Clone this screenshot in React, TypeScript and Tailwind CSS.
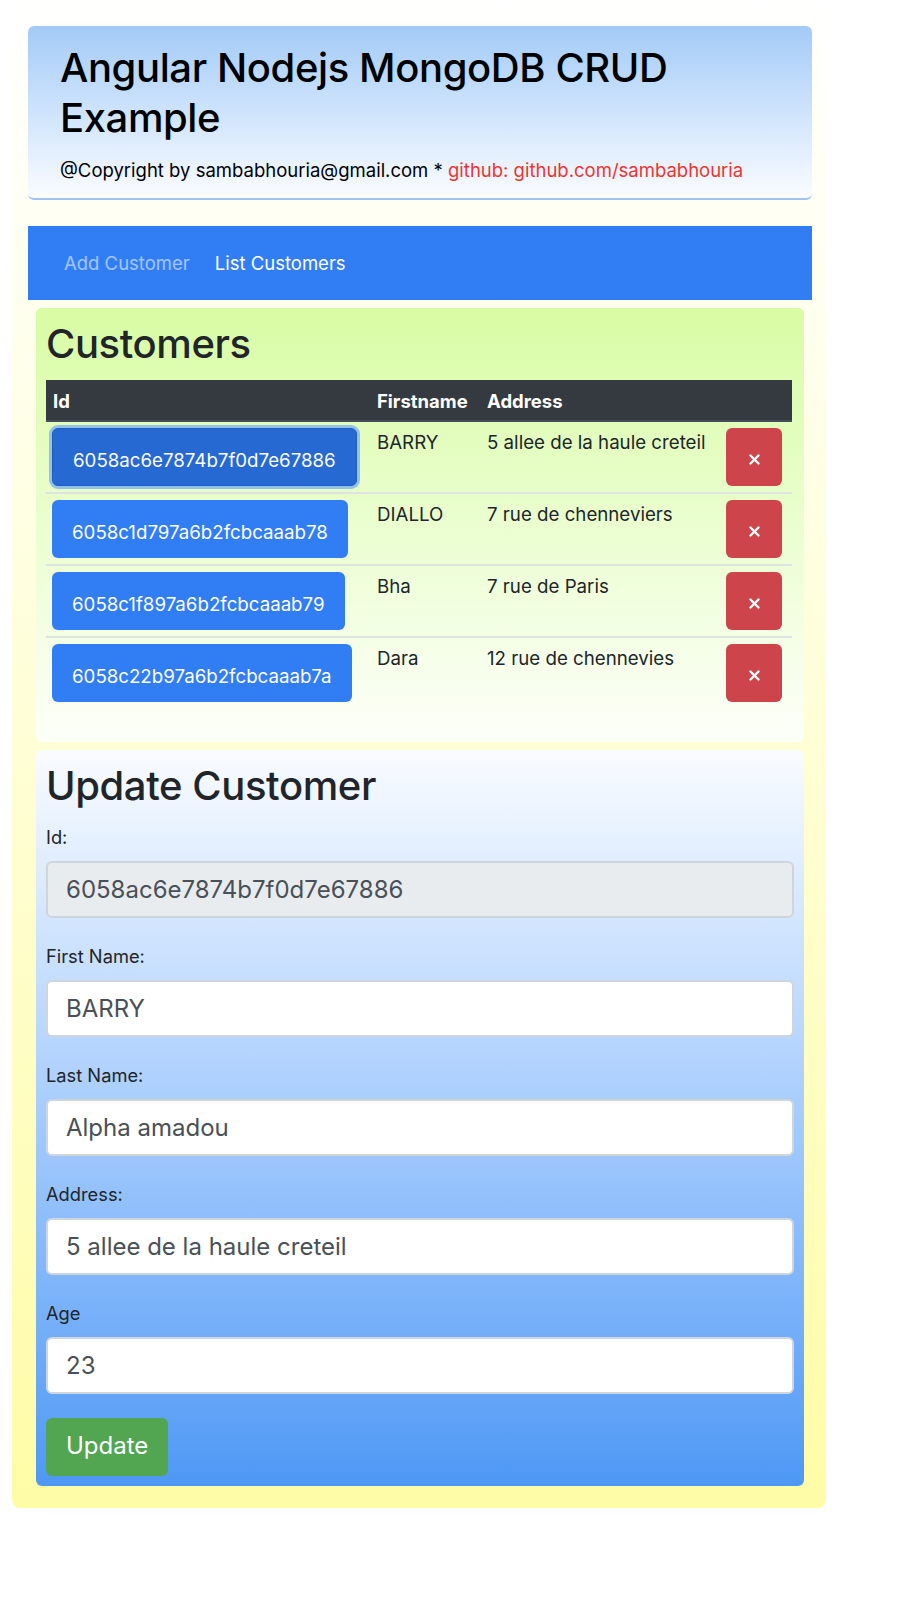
import React from "react"

type Customer = {
  id: string
  firstname: string
  address: string
}

const customers: Customer[] = [
  { id: "6058ac6e7874b7f0d7e67886", firstname: "BARRY", address: "5 allee de la haule creteil" },
  { id: "6058c1d797a6b2fcbcaaab78", firstname: "DIALLO", address: "7 rue de chenneviers" },
  { id: "6058c1f897a6b2fcbcaaab79", firstname: "Bha", address: "7 rue de Paris" },
  { id: "6058c22b97a6b2fcbcaaab7a", firstname: "Dara", address: "12 rue de chennevies" },
]

const fields = [
  { label: "First Name:", value: "BARRY" },
  { label: "Last Name:", value: "Alpha amadou" },
  { label: "Address:", value: "5 allee de la haule creteil" },
  { label: "Age", value: "23" },
]

export default function App() {
  return (
    <div className="min-h-[1624px] bg-white font-['Inter',sans-serif] text-[#212529]">
      <div className="ml-[12px] w-[814px] rounded-b-lg bg-gradient-to-b from-white to-[#fffca6] pl-[16px] pr-[14px] pt-[26px] pb-[22px]">
        <Header />
        <Nav />
        <div className="px-[8px] pt-[8px] flex flex-col gap-[8px]">
          <CustomerList />
          <UpdateForm />
        </div>
      </div>
    </div>
  )
}

function Header() {
  return (
    <div className="h-[174px] rounded-md border-b-2 border-[#9ec5f0] bg-gradient-to-b from-[#a3cbf7] to-[#fafcff] px-[32px] pt-[17px]">
      <h1 className="text-[40px] leading-[50px] font-medium text-black tracking-[-0.4px]">
        Angular Nodejs MongoDB CRUD Example
      </h1>
      <p className="mt-[14px] text-[18.5px] leading-[27px] text-black">
        @Copyright by sambabhouria@gmail.com *{" "}
        <span className="text-[#ec3530]">github: github.com/sambabhouria</span>
      </p>
    </div>
  )
}

function Nav() {
  return (
    <nav className="mt-[26px] h-[74px] bg-[#317df4] flex items-center gap-[25px] pl-[36px] pt-[2px] text-[18.5px]">
      <a className="text-white/55 cursor-pointer">Add Customer</a>
      <a className="text-white cursor-pointer">List Customers</a>
    </nav>
  )
}

function CustomerList() {
  return (
    <div className="rounded-md bg-gradient-to-b from-[#d8fca3] to-[#fdfff9] pl-[10px] pr-[12px] pt-[12px] pb-[34px]">
      <h2 className="text-[40px] leading-[48px] font-medium mb-[12px] tracking-[-0.4px]">Customers</h2>
      <div className="grid grid-cols-[324px_110px_1fr_72px] text-[18.7px] leading-[28px]">
        <div className="contents font-bold text-white text-[18.5px]">
          <div className="bg-[#343a40] border-b-2 border-[#454d55] pl-[7px] pt-[7px] pb-[5px]">Id</div>
          <div className="bg-[#343a40] border-b-2 border-[#454d55] pl-[7px] pt-[7px] pb-[5px]">Firstname</div>
          <div className="bg-[#343a40] border-b-2 border-[#454d55] pl-[7px] pt-[7px] pb-[5px]">Address</div>
          <div className="bg-[#343a40] border-b-2 border-[#454d55]" />
        </div>
        {customers.map((c, i) => {
          const last = i === customers.length - 1
          const border = last ? "" : " border-b-2 border-[#dfe3e3]"
          return (
            <React.Fragment key={c.id}>
              <div className={"py-[6px] pl-[6px]" + border}>
                {i === 0 ? (
                  <div className="inline-block rounded-[9px] bg-[#93c4e8] p-[3px] -m-[3px]">
                    <button className="h-[58px] rounded-md border border-[#1f5cc0] bg-[#2669d3] px-[20px] pt-[18px] pb-[10px] text-white">
                      {c.id}
                    </button>
                  </div>
                ) : (
                  <button className="h-[58px] rounded-md bg-[#317df4] px-[20px] pt-[19px] pb-[11px] text-white">
                    {c.id}
                  </button>
                )}
              </div>
              <div className={"pt-[7px] pb-[5px] pl-[7px]" + border}>{c.firstname}</div>
              <div className={"pt-[7px] pb-[5px] pl-[7px]" + border}>{c.address}</div>
              <div className={"py-[6px] pl-[6px]" + border}>
                <button className="h-[58px] w-[56px] rounded-md bg-[#ce444b] flex items-center justify-center pt-[5px]">
                  <svg width="11" height="11" viewBox="0 0 11 11">
                    <path d="M1.5 1.5 L9.5 9.5 M9.5 1.5 L1.5 9.5" stroke="white" strokeWidth="2.4" strokeLinecap="round" />
                  </svg>
                </button>
              </div>
            </React.Fragment>
          )
        })}
      </div>
    </div>
  )
}

function UpdateForm() {
  return (
    <div className="rounded-md bg-gradient-to-b from-[#fafcff] to-[#4d98f5] px-[10px] pt-[12px] pb-[10px]">
      <h2 className="text-[40px] leading-[48px] font-medium mb-[12px] tracking-[-0.4px]">Update Customer</h2>
      <FormGroup label="Id:" value="6058ac6e7874b7f0d7e67886" readOnly />
      {fields.map((f) => (
        <FormGroup key={f.label} label={f.label} value={f.value} />
      ))}
      <button className="mt-[1px] h-[58px] w-[122px] rounded-md bg-[#52a551] pl-[20px] pt-[10px] pb-[12px] text-left text-[24px] leading-[36px] text-white">
        Update
      </button>
    </div>
  )
}

function FormGroup({ label, value, readOnly }: { label: string; value: string; readOnly?: boolean }) {
  return (
    <div className="mb-[23px]">
      <label className="block text-[18.3px] leading-[27px] pt-[2px] mb-[10px]">{label}</label>
      <input
        readOnly
        value={value}
        className={
          "block w-full h-[57px] rounded-md border-2 border-[#cfd5dc] pl-[18px] text-[24px] text-[#495057] outline-none " +
          (readOnly ? "bg-[#e9ecef]" : "bg-white")
        }
      />
    </div>
  )
}
